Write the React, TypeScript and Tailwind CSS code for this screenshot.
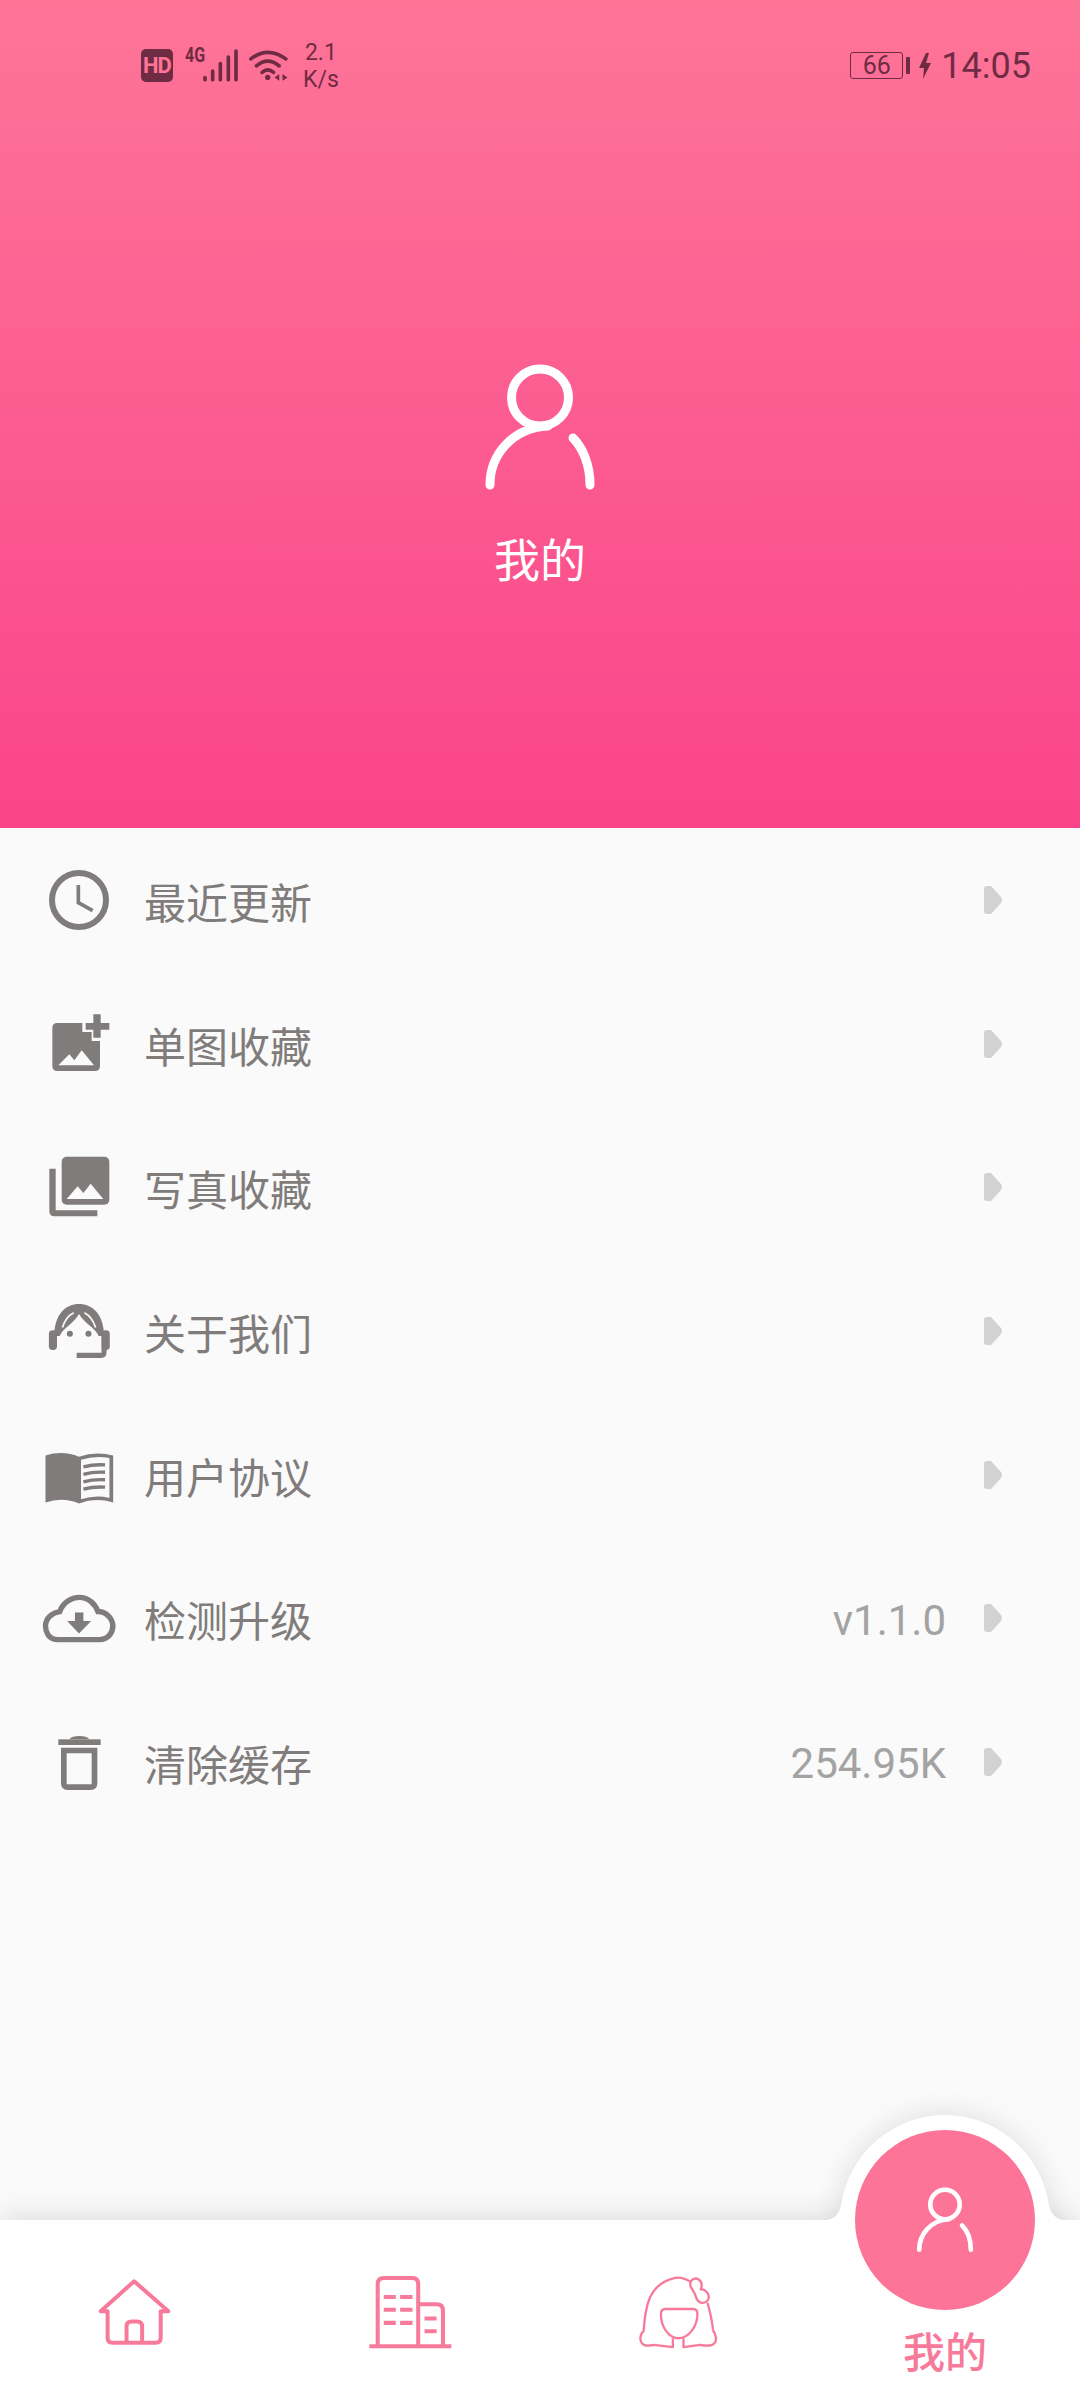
import React from "react";

const GRAY = "#807c7b";
const PINK = "#f87a9b";
const BAR = "#6f2b43";

const PersonIcon = ({ className }: { className: string }) => (
  <svg viewBox="0 0 120 135" className={className} fill="none" stroke="white" strokeWidth="9" strokeLinecap="round">
    <circle cx="60" cy="37.5" r="28.5" />
    <path d="M10 125C10 95 32 68 68 66" />
    <path d="M93 78C103 88 110 105 110 125" />
  </svg>
);

const ClockIcon = () => (
  <svg viewBox="12 15 270 270" className="h-[90px] w-[90px]" fill="none" stroke={GRAY}>
    <circle cx="147" cy="150" r="81" strokeWidth="18" />
    <path d="M145 105V158L188 182" strokeWidth="11" />
  </svg>
);

const ImagePlusIcon = () => (
  <svg viewBox="12 446 270 270" className="h-[90px] w-[90px]" fill={GRAY}>
    <path d="M82 518H157V545H185V572H210V647Q210 662 195 662H82Q67 662 67 647V533Q67 518 82 518Z" />
    <path d="M190 492H212V518H238V538H212V562H190V538H167V518H190Z" />
    <path d="M85 645L118 612L133 630L155 600L192 645Z" fill="#fafafa" />
  </svg>
);

const PhotosIcon = () => (
  <svg viewBox="12 877 270 270" className="h-[90px] w-[90px]" fill={GRAY}>
    <rect x="95" y="921" width="143" height="144" rx="15" />
    <path d="M110 1048L143 1010L160 1030L182 1002L220 1048Z" fill="#fafafa" />
    <path d="M58 957H77V1082H202V1100H73Q58 1100 58 1085Z" />
  </svg>
);

const HeadsetIcon = () => (
  <svg viewBox="14 47 266 266" className="h-[90px] w-[90px]" fill={GRAY}>
    <path d="M74 195C74 130 108 100 147 100C186 100 221 130 221 195L205 195C195 170 165 160 147 130C130 160 100 170 90 195Z" />
    <path d="M98 170C104 150 116 134 131 126" fill="none" stroke="#fafafa" strokeWidth="5" />
    <path d="M196 170C190 150 178 134 163 126" fill="none" stroke="#fafafa" strokeWidth="5" />
    <rect x="58" y="178" width="24" height="58" rx="11" />
    <rect x="214" y="178" width="24" height="58" rx="11" />
    <path d="M140 252H212Q221 252 221 243V195" fill="none" stroke={GRAY} strokeWidth="15" />
    <circle cx="120" cy="188" r="9" />
    <circle cx="175" cy="188" r="9" />
  </svg>
);

const BookIcon = () => (
  <svg viewBox="14 473 266 266" className="h-[90px] w-[90px]" fill={GRAY}>
    <path d="M48 548Q100 532 147 552Q195 535 248 548V687Q195 672 147 690Q100 670 48 687Z" />
    <path d="M153 561Q195 548 237 556V674Q195 664 153 678Z" fill="#fafafa" />
    <path d="M160 582Q190 574 224 576M160 604Q190 596 224 598M160 626Q190 618 224 620M160 648Q190 640 224 642" fill="none" stroke={GRAY} strokeWidth="10" />
  </svg>
);

const CloudIcon = () => (
  <svg viewBox="14 898 266 266" className="h-[90px] w-[90px]" fill="none" stroke={GRAY} strokeWidth="16">
    <path d="M85 1095C55 1095 48 1070 48 1055C48 1030 70 1015 90 1012C100 985 125 970 148 970C175 970 195 990 203 1012C225 1012 247 1030 247 1055C247 1075 232 1095 208 1095Z" />
    <path d="M135 1015H160V1040H183L147 1077L112 1040H135Z" fill={GRAY} stroke="none" />
  </svg>
);

const TrashIcon = () => (
  <svg viewBox="-48 -24 270 270" className="h-[90px] w-[90px]" fill={GRAY}>
    <rect x="25" y="43" width="127" height="17" />
    <path d="M58 43Q65 33 88 33Q110 33 118 43Z" />
    <path fillRule="evenodd" d="M33 68H142V175Q142 195 122 195H53Q33 195 33 175ZM50 85V178H125V85Z" />
  </svg>
);

const HomeIcon = () => (
  <svg viewBox="110 260 235 215" className="h-[72px] w-[78px]" fill="none" stroke={PINK} strokeWidth="12" strokeLinejoin="round">
    <path d="M225 275L124 365H145V445Q145 460 160 460H290Q305 460 305 445V365H328Z" />
    <path d="M202 460V412Q202 396 218 396H233Q249 396 249 412V460" />
  </svg>
);

const BuildingIcon = () => (
  <svg viewBox="920 255 260 230" className="ml-[10px] h-[77px] w-[87px]" fill="none" stroke={PINK} strokeWidth="12">
    <path d="M927 471H1172" />
    <path d="M952 471V285Q952 267 970 267H1055Q1073 267 1073 285V471" />
    <path d="M1073 345H1128Q1147 345 1147 364V471" />
    <path d="M970 324H1006M1019 324H1056M970 362H1006M1019 362H1056M970 401H1006M1019 401H1056M1092 388H1128M1092 426H1128" />
  </svg>
);

const GirlIcon = () => (
  <svg viewBox="50 555 250 225" className="ml-[6px] h-[75px] w-[83px]" fill="none" stroke={PINK} strokeWidth="7" strokeLinejoin="round">
    <path d="M70 722C75 650 85 580 165 563C185 560 200 568 212 575" />
    <path d="M262 638C270 665 276 690 279 720" />
    <path d="M212 590C205 572 222 560 236 568C248 576 245 590 242 598C262 598 272 620 262 632C250 644 232 638 228 622C226 610 218 602 212 590Z" />
    <path d="M122 672Q122 658 135 657H220Q232 658 232 672C232 710 205 745 175 745C145 745 122 710 122 672Z" />
    <path d="M158 745V772L100 765Q62 775 60 745Q62 728 72 722" />
    <path d="M190 745V772L240 765Q288 775 288 745Q285 728 278 720" />
  </svg>
);

const MENU = [
  { icon: <ClockIcon />, title: "最近更新" },
  { icon: <ImagePlusIcon />, title: "单图收藏" },
  { icon: <PhotosIcon />, title: "写真收藏" },
  { icon: <HeadsetIcon />, title: "关于我们" },
  { icon: <BookIcon />, title: "用户协议" },
  { icon: <CloudIcon />, title: "检测升级", value: "v1.1.0" },
  { icon: <TrashIcon />, title: "清除缓存", value: "254.95K" },
];

const StatusBar = () => (
  <div className="flex h-[131px] items-center justify-between pl-[141px] pr-[49px] text-[#6f2b43]">
    <div className="flex items-center">
      <div className="flex h-[33px] w-[32px] items-center justify-center rounded-[5px] bg-[#6f2b43] text-[22px] font-bold tracking-[-1px] text-[#ff7598]">
        HD
      </div>
      <div className="relative ml-[12px] h-[33px] w-[54px]">
        <span className="absolute left-0 top-[-4px] origin-left scale-x-[0.8] text-[20px] font-bold leading-[20px]">4G</span>
        <svg viewBox="192 84 162 99" className="h-[33px] w-[54px]" stroke={BAR} strokeWidth="11" strokeLinecap="round">
          <path d="M252 176V170M275 176V150M298 176V128M322 176V108M345 176V90" />
        </svg>
      </div>
      <svg viewBox="378 84 120 100" className="ml-[9px] h-[33px] w-[40px]" fill="none" stroke={BAR} strokeWidth="11" strokeLinecap="round">
        <path d="M386 114Q437 74 492 114" />
        <path d="M403 135Q437 106 472 135" />
        <path d="M420 155Q437 140 455 155" />
        <circle cx="437" cy="170" r="8" fill={BAR} stroke="none" />
        <path d="M472 160V180L458 170ZM482 160V180L497 170Z" fill={BAR} stroke="none" />
      </svg>
      <div className="ml-[15px] flex flex-col items-center text-[23px] leading-[27px]">
        <span>2.1</span>
        <span>K/s</span>
      </div>
    </div>
    <div className="flex items-center">
      <div className="flex h-[27px] w-[53px] items-center justify-center rounded-[3px] border border-[#6f2b43] text-[25px] leading-none">66</div>
      <div className="ml-[3px] h-[17px] w-[4px] rounded-[1px] bg-[#6f2b43]" />
      <svg viewBox="0 0 12 26" className="ml-[9px] h-[26px] w-[12px]" fill={BAR}>
        <path d="M7 0L0 15H5L4 26L12 10H7L10 0Z" />
      </svg>
      <span className="ml-[10px] text-[36px] leading-none">14:05</span>
    </div>
  </div>
);

const MenuRow = ({ icon, title, value }: { icon: React.ReactNode; title: string; value?: string }) => (
  <div className="flex h-[143.7px] items-center pl-[34px] pr-[78px]">
    {icon}
    <span className="ml-[20px] mt-[10px] flex-1 text-[42px] leading-[60px] text-[#807c7b]">{title}</span>
    {value && <span className="mr-[38px] mt-[5px] text-[42px] leading-[50px] text-[#a3a3a3]">{value}</span>}
    <svg viewBox="0 0 18 28" className="h-[28px] w-[18px]" fill="#d2d2d2">
      <path d="M0 3Q0 0 3 0H7L17 11Q19 14 17 17L7 28H3Q0 28 0 25Z" />
    </svg>
  </div>
);

const TabBar = () => (
  <div className="relative h-[180px]">
    <div className="absolute inset-0 bg-white shadow-[0_0_30px_rgba(0,0,0,0.15)]" />
    <div className="absolute right-[30px] top-[-105px] h-[210px] w-[210px] rounded-full bg-white shadow-[0_0_30px_rgba(0,0,0,0.12)]" />
    <div className="absolute inset-0 bg-white" />
    <svg viewBox="0 0 18 16" className="absolute left-[825px] top-[-16px] h-[16px] w-[18px]" fill="white">
      <path d="M0 16C9 16 15 9 16 0L18 16Z" />
    </svg>
    <svg viewBox="0 0 18 16" className="absolute left-[1047px] top-[-16px] h-[16px] w-[18px]" fill="white">
      <path d="M18 16C9 16 3 9 2 0L0 16Z" />
    </svg>
    <div className="relative grid h-full grid-cols-4">
      <div className="flex items-center justify-center pt-[4px]">
        <HomeIcon />
      </div>
      <div className="flex items-center justify-center pt-[4px]">
        <BuildingIcon />
      </div>
      <div className="flex items-center justify-center pt-[4px]">
        <GirlIcon />
      </div>
      <div className="relative flex justify-center pt-[109px]">
        <div className="absolute left-[45px] top-[-90px] flex h-[180px] w-[180px] items-center justify-center rounded-full bg-[#fc7498]">
          <PersonIcon className="h-[70px] w-[62px]" />
        </div>
        <span className="text-[42px] font-medium leading-[50px] text-[#f87a9b]">我的</span>
      </div>
    </div>
  </div>
);

export default function App() {
  return (
    <div className="flex h-[2400px] w-[1080px] flex-col overflow-hidden bg-[#fafafa] font-['Roboto','Noto_Sans_CJK_SC',sans-serif]">
      <div className="flex h-[828px] flex-col items-center bg-[linear-gradient(180deg,#fe7598,#fa448a)]">
        <div className="w-full">
          <StatusBar />
        </div>
        <PersonIcon className="mt-[229px] h-[135px] w-[120px]" />
        <span className="mt-[36px] text-[46px] leading-[60px] text-white">我的</span>
      </div>
      <div className="flex-1">
        {MENU.map((item) => (
          <MenuRow key={item.title} icon={item.icon} title={item.title} value={item.value} />
        ))}
      </div>
      <TabBar />
    </div>
  );
}
